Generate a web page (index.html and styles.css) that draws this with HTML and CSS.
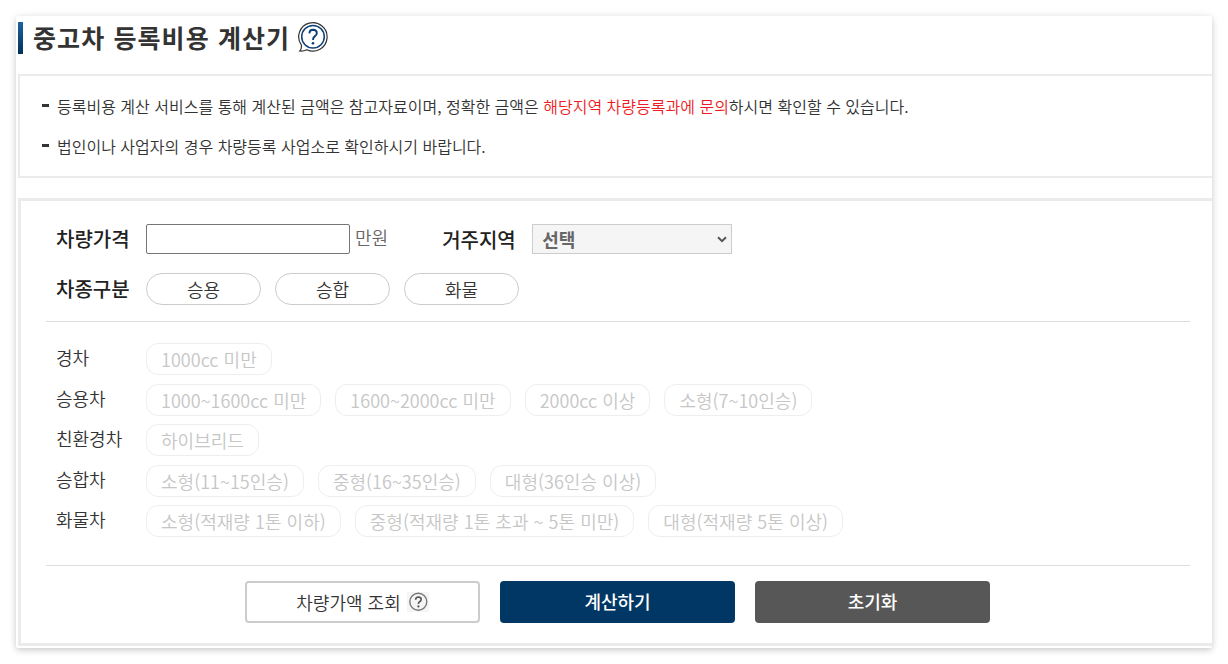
FILE: index.html
```
<!DOCTYPE html>
<html lang="ko">
<head>
    <meta charset="UTF-8">
    <meta name="viewport" content="width=device-width, initial-scale=1.0">
    <title>중고차 등록비용 계산기</title>
    <link rel="stylesheet" href="styles.css">
</head>
<body>
    <div class="container">
        <div class="title">
            <h1>중고차 등록비용 계산기</h1>
            <svg class="help-icon" width="30" height="30" viewBox="0 0 30 30" fill="none">
                <path d="M3.4 23.2 A14.2 14.2 0 1 1 8.8 27.7 Q5.5 29.4 1.8 29 Q3.9 26.8 3.4 23.2 Z" stroke="#333" stroke-width="1.2"/>
                <circle cx="15" cy="14.7" r="11.3" stroke="#0b3f74" stroke-width="1.5"/>
                <path d="M11.4 11.4 Q11.6 7.8 15.1 7.8 Q18.8 7.9 18.8 11.2 Q18.8 13 16.7 14.4 Q15 15.6 15 17.9" stroke="#0b3f74" stroke-width="1.9"/>
                <circle cx="15" cy="21.2" r="1.3" fill="#0b3f74"/>
            </svg>
        </div>

        <!-- 안내 문구 -->
        <ul class="notice">
            <li>등록비용 계산 서비스를 통해 계산된 금액은 참고자료이며, 정확한 금액은 <span class="red">해당지역 차량등록과에 문의</span>하시면 확인할 수 있습니다.</li>
            <li>법인이나 사업자의 경우 차량등록 사업소로 확인하시기 바랍니다.</li>
        </ul>

        <!-- 계산 폼 -->
        <form class="calc">
            <div class="basic">
                <div class="row">
                    <label class="label" for="price">차량가격</label>
                    <input type="text" id="price">
                    <span class="unit">만원</span>
                    <label class="label area-label" for="area">거주지역</label>
                    <div class="select-wrap">
                        <select id="area">
                            <option>선택</option>
                        </select>
                        <svg class="arrow" width="10" height="7" viewBox="0 0 10 7" fill="none">
                            <path d="M1 1.2 L5 5.2 L9 1.2" stroke="#555" stroke-width="2"/>
                        </svg>
                    </div>
                </div>
                <div class="row kind">
                    <span class="label">차종구분</span>
                    <div class="chips">
                        <button type="button" class="pill">승용</button>
                        <button type="button" class="pill">승합</button>
                        <button type="button" class="pill">화물</button>
                    </div>
                </div>
            </div>

            <div class="types">
                <div class="type">
                    <span class="type-name">경차</span>
                    <div class="chips">
                        <button type="button" class="chip" disabled>1000cc 미만</button>
                    </div>
                </div>
                <div class="type">
                    <span class="type-name">승용차</span>
                    <div class="chips">
                        <button type="button" class="chip" disabled>1000~1600cc 미만</button>
                        <button type="button" class="chip" disabled>1600~2000cc 미만</button>
                        <button type="button" class="chip" disabled>2000cc 이상</button>
                        <button type="button" class="chip" disabled>소형(7~10인승)</button>
                    </div>
                </div>
                <div class="type">
                    <span class="type-name">친환경차</span>
                    <div class="chips">
                        <button type="button" class="chip" disabled>하이브리드</button>
                    </div>
                </div>
                <div class="type">
                    <span class="type-name">승합차</span>
                    <div class="chips">
                        <button type="button" class="chip" disabled>소형(11~15인승)</button>
                        <button type="button" class="chip" disabled>중형(16~35인승)</button>
                        <button type="button" class="chip" disabled>대형(36인승 이상)</button>
                    </div>
                </div>
                <div class="type">
                    <span class="type-name">화물차</span>
                    <div class="chips">
                        <button type="button" class="chip" disabled>소형(적재량 1톤 이하)</button>
                        <button type="button" class="chip" disabled>중형(적재량 1톤 초과 ~ 5톤 미만)</button>
                        <button type="button" class="chip" disabled>대형(적재량 5톤 이상)</button>
                    </div>
                </div>
            </div>

            <div class="buttons">
                <button type="button" class="btn btn-line">차량가액 조회
                    <svg width="22" height="20" viewBox="0 0 22 20" fill="none">
                        <rect width="22" height="20" fill="#f5f5f5"/>
                        <circle cx="11.3" cy="9.8" r="8.5" stroke="#777" stroke-width="1.4"/>
                        <path d="M8.6 7.8 Q8.7 5 11.4 5 Q14.2 5.1 14.2 7.4 Q14.2 8.8 12.6 9.7 Q11.4 10.5 11.4 12" stroke="#555" stroke-width="1.6"/>
                        <circle cx="11.4" cy="14.4" r="1.1" fill="#555"/>
                    </svg>
                </button>
                <button type="button" class="btn btn-calc">계산하기</button>
                <button type="reset" class="btn btn-reset">초기화</button>
            </div>
        </form>
    </div>
</body>
</html>
```
FILE: styles.css
```
* {
    box-sizing: border-box;
}

body {
    min-height: 664px;
    margin: 0;
    padding: 16px 0 0 16px;
    background: #fff;
    color: #333;
    font-family: "Noto Sans CJK KR", sans-serif;
    font-size: 18px;
    font-weight: 350;
}

button, input, select {
    font-family: inherit;
    font-size: 18px;
    font-weight: inherit;
}

.container {
    width: 1196px;
    height: 632px;
    padding: 6px 0 0 2px;
    background: #fff;
    border-radius: 2px;
    box-shadow: 0 2px 6px rgba(0,0,0,0.2), 0 0 16px rgba(0,0,0,0.03);
}

.title {
    display: flex;
    align-items: flex-start;
    height: 52px;
}

h1 {
    height: 32px;
    margin: 0;
    padding-left: 10px;
    border-left: 5px solid;
    border-image: linear-gradient(#1c64a5, #003057) 1;
    font-size: 25px;
    font-weight: bold;
    line-height: 30px;
    letter-spacing: 1.1px;
}

.help-icon {
    margin-left: 8px;
}

.notice {
    height: 104px;
    margin: 0 0 20px;
    padding: 10px 0 0 22px;
    border: 2px solid #ebebeb;
    border-right: none;
    list-style: none;
    font-size: 16px;
}

.notice li {
    display: flex;
    align-items: center;
    height: 40px;
    white-space: pre;
}

.notice li::before {
    content: "";
    width: 7px;
    height: 3px;
    margin: -2px 8px 0 0;
    background: #333;
}

.red {
    color: #ed1c24;
}

.calc {
    height: 448px;
    padding: 23px 22px 0 25px;
    border: 3px solid #ebebeb;
    border-right: none;
}

.basic {
    height: 98px;
    border-bottom: 1px solid #ddd;
}

.row {
    display: flex;
    align-items: center;
    height: 30px;
    padding-left: 10px;
}

.label {
    width: 90px;
    font-size: 20px;
    font-weight: 500;
    line-height: 28px;
    padding-bottom: 1px;
    color: #222;
}

#price {
    width: 204px;
    height: 30px;
    padding: 0 5px;
    border: 1px solid #767676;
    border-radius: 2px;
}

.unit {
    margin-left: 5px;
    padding-bottom: 5px;
    color: #666;
    line-height: 28px;
}

.area-label {
    margin-left: 54px;
    padding: 2px 0 0;
}

.select-wrap {
    position: relative;
}

select {
    display: block;
    width: 200px;
    height: 30px;
    padding: 0 9px;
    border: 1px solid #ccc;
    background: #f5f5f5;
    color: #666;
    font-weight: bold;
    appearance: none;
}

.arrow {
    position: absolute;
    right: 5px;
    top: 12px;
}

.kind {
    height: 32px;
    margin-top: 19px;
}

.chips {
    display: flex;
    gap: 14px;
}

.pill {
    width: 115px;
    height: 32px;
    padding: 0;
    border: 1px solid #ccc;
    border-radius: 16px;
    background: #fff;
    color: #333;
    line-height: 28px;
}

.types {
    display: flex;
    flex-direction: column;
    gap: 8.5px;
    height: 244px;
    padding: 21px 0 0 10px;
    border-bottom: 1px solid #ddd;
}

.type {
    display: flex;
}

.type-name {
    width: 90px;
    line-height: 28px;
}

.chip {
    height: 32px;
    padding: 0 14px;
    border: 1px solid #eee;
    border-radius: 12px;
    background: #fff;
    color: #c6c6c6;
    line-height: 28px;
    letter-spacing: 0.03px;
    white-space: nowrap;
}

.buttons {
    display: flex;
    gap: 20px;
    padding: 15px 0 0 199px;
}

.btn {
    display: flex;
    align-items: center;
    justify-content: center;
    width: 235px;
    height: 42px;
    padding: 0 0 2px;
    border: none;
    border-radius: 4px;
    color: #fff;
    font-weight: 500;
}

.btn-line {
    gap: 6px;
    padding: 0 0 1px;
    border: 2px solid #ccc;
    background: #fff;
    color: #333;
    font-weight: inherit;
}

.btn-calc {
    background: #003764;
}

.btn-reset {
    background: #575757;
}
```
